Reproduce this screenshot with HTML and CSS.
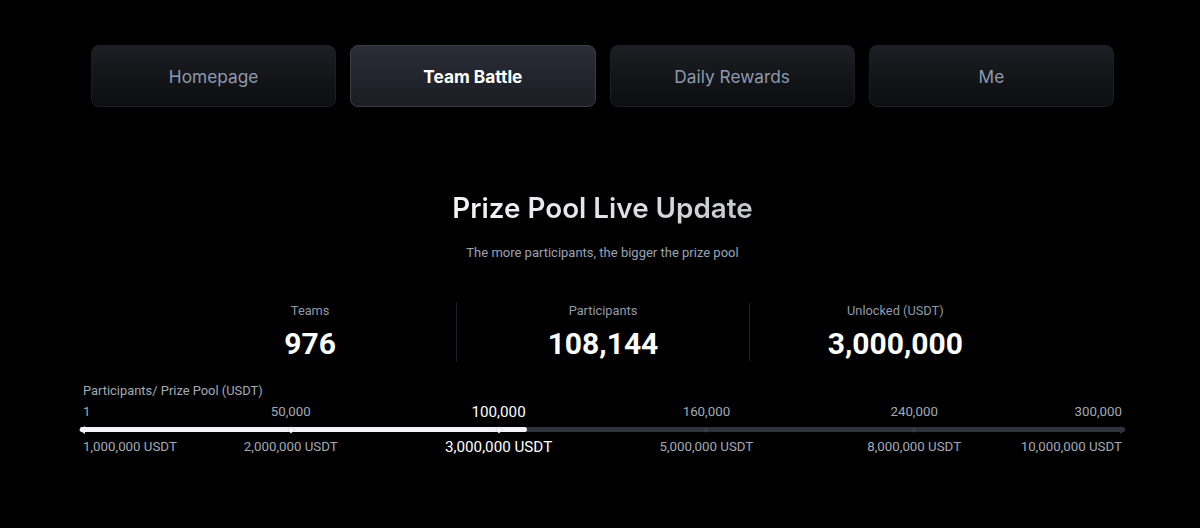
FILE: index.html
```html
<!DOCTYPE html>
<html lang="en">
<head>
<meta charset="utf-8">
<title>Prize Pool Live Update</title>
<link rel="stylesheet" href="styles.css">
</head>
<body>
<div class="page">
  <nav class="tabs">
    <button class="tab">Homepage</button>
    <button class="tab active">Team Battle</button>
    <button class="tab">Daily Rewards</button>
    <button class="tab">Me</button>
  </nav>

  <section class="pool">
    <h1 class="title">Prize Pool Live Update</h1>
    <p class="subtitle">The more participants, the bigger the prize pool</p>

    <div class="stats">
      <div class="stat">
        <div class="stat-label">Teams</div>
        <div class="stat-value">976</div>
      </div>
      <div class="stat">
        <div class="stat-label">Participants</div>
        <div class="stat-value">108,144</div>
      </div>
      <div class="stat">
        <div class="stat-label">Unlocked (USDT)</div>
        <div class="stat-value">3,000,000</div>
      </div>
    </div>

    <div class="scale">
      <div class="scale-title">Participants/ Prize Pool (USDT)</div>
      <div class="marks top">
        <span class="mark first">1</span>
        <span class="mark" style="left:20%">50,000</span>
        <span class="mark current" style="left:40%">100,000</span>
        <span class="mark" style="left:60%">160,000</span>
        <span class="mark" style="left:80%">240,000</span>
        <span class="mark last">300,000</span>
      </div>
      <div class="track">
        <div class="fill" style="width:42.8%"></div>
        <span class="arrow-left"></span>
        <span class="arrow-right"></span>
        <div class="ticks">
          <span class="tick done" style="left:20%"></span>
          <span class="tick done" style="left:40%"></span>
          <span class="tick" style="left:60%"></span>
          <span class="tick" style="left:80%"></span>
        </div>
      </div>
      <div class="marks bottom">
        <span class="mark first">1,000,000 USDT</span>
        <span class="mark" style="left:20%">2,000,000 USDT</span>
        <span class="mark current" style="left:40%">3,000,000 USDT</span>
        <span class="mark" style="left:60%">5,000,000 USDT</span>
        <span class="mark" style="left:80%">8,000,000 USDT</span>
        <span class="mark last">10,000,000 USDT</span>
      </div>
    </div>
  </section>
</div>
</body>
</html>
```

FILE: styles.css
```css
* { box-sizing: border-box; }

html, body {
  margin: 0;
  background: #000;
  height: 100%;
}

body {
  font-family: Roboto, "Liberation Sans", Arial, sans-serif;
  color: #fff;
}

.page {
  width: 1045px;
  margin-left: 80px;
  padding-top: 45px;
}

/* Tabs */
.tabs {
  display: flex;
  gap: 14px;
  padding: 0 11px;
}

.tab {
  flex: 1;
  height: 62px;
  border-radius: 8px;
  border: 1px solid #1c1e23;
  background: linear-gradient(180deg, #1d1f24 0%, #131418 55%, #0d0e11 100%);
  color: #8d9ab0;
  font-family: Inter, Roboto, "Liberation Sans", sans-serif;
  font-size: 17.3px;
  font-weight: 400;
  cursor: pointer;
  padding: 0;
}

.tab.active {
  border-color: #3a3d46;
  background: linear-gradient(180deg, #2b2e37 0%, #21242c 55%, #1b1d24 100%);
  color: #fff;
  font-weight: 700;
}

/* Pool header */
.pool {
  display: flex;
  flex-direction: column;
}

.title {
  margin: 83px 0 0;
  text-align: center;
  font-family: Inter, Roboto, sans-serif;
  font-size: 27.8px;
  line-height: 36px;
  font-weight: 600;
  background: linear-gradient(90deg, #f4f4f6 0%, #e3e4e8 50%, #c4c6cc 100%);
  -webkit-background-clip: text;
  background-clip: text;
  color: transparent;
  align-self: center;
}

.subtitle {
  margin: 17px 0 0;
  text-align: center;
  font-family: Roboto, sans-serif;
  font-size: 13px;
  line-height: 20px;
  color: #9aa3b5;
}

/* Stats */
.stats {
  display: grid;
  grid-template-columns: repeat(3, 1fr);
  width: 877px;
  margin: 40px auto 0;
}

.stat {
  display: flex;
  flex-direction: column;
  align-items: center;
  height: 58px;
}

.stat + .stat {
  border-left: 1px solid #1f2126;
}

.stat-label {
  margin-top: -1px;
  font-size: 12.8px;
  line-height: 18px;
  color: #919aab;
}

.stat-value {
  margin-top: 6px;
  font-size: 30px;
  line-height: 36px;
  font-weight: 700;
  color: #fff;
}

/* Scale */
.scale {
  margin-top: 22px;
}

.scale-title {
  padding-left: 3px;
  font-size: 12.9px;
  line-height: 16px;
  color: #a3aab6;
}

.marks {
  position: relative;
  height: 17px;
  margin: 0 3px;
  font-size: 13.3px;
  line-height: 17px;
  color: #a3aab6;
}

.marks.top { margin-top: 4px; }
.marks.bottom { margin-top: 6px; }

.mark {
  position: absolute;
  top: 0;
  white-space: nowrap;
  transform: translateX(-50%);
}

.mark.first { left: 0; transform: none; }
.mark.last { right: 0; transform: none; }

.mark.current {
  color: #fff;
  font-size: 15.2px;
}

.marks.bottom .mark.current { top: 1px; }
.marks.top .mark.current { top: 1px; }

.track {
  position: relative;
  height: 5px;
  margin-top: 7px;
  background: #2e323a;
  border-radius: 2px;
}

.fill {
  position: absolute;
  left: 0;
  top: 0;
  bottom: 0;
  background: #f4f4f6;
  border-radius: 2px 3px 3px 2px;
}

.arrow-left,
.arrow-right {
  position: absolute;
  top: 50%;
  width: 0;
  height: 0;
  border-top: 4.5px solid transparent;
  border-bottom: 4.5px solid transparent;
  transform: translateY(-50%);
}

.arrow-left {
  left: -1px;
  border-right: 6px solid #f4f4f6;
}

.arrow-right {
  right: -1px;
  border-left: 6px solid #2e323a;
}

.ticks {
  position: absolute;
  left: 3px;
  right: 3px;
  top: 0;
  bottom: 0;
}

.tick {
  position: absolute;
  top: 50%;
  width: 4px;
  height: 4px;
  background: #3a3e47;
  transform: translate(-50%, -50%) rotate(45deg);
}

.tick.done {
  background: #fff;
  box-shadow: 0 0 0 0.5px #cfd0d4;
}
```
